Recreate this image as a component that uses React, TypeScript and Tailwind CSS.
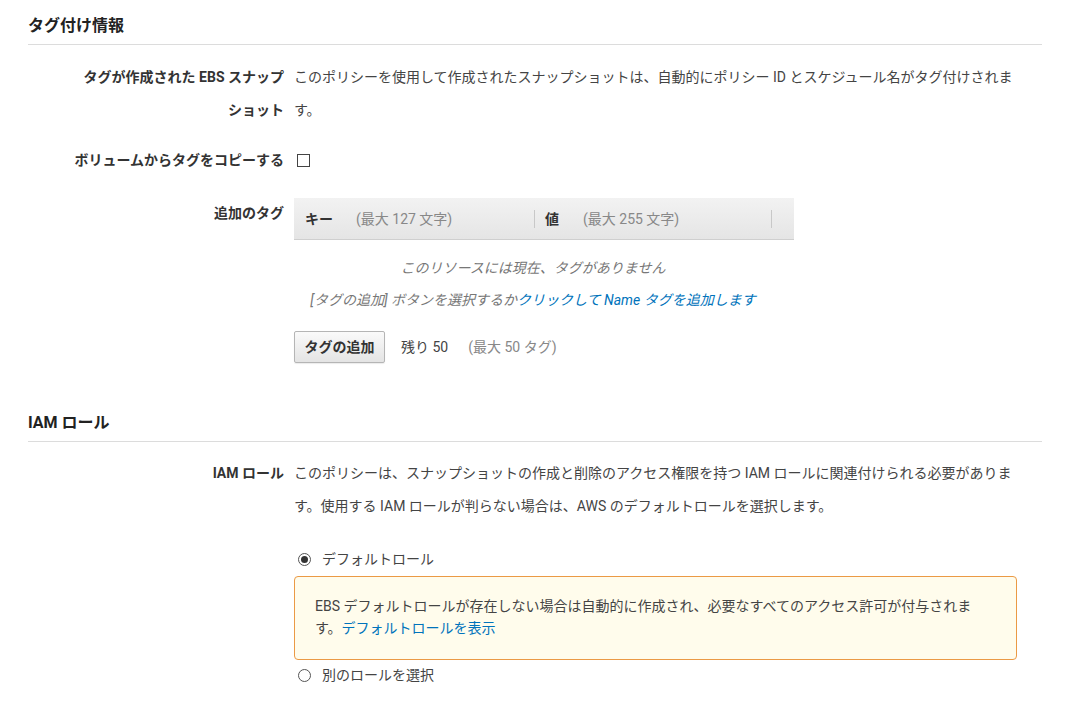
import React from 'react';

const font = "font-['Roboto','Noto_Sans_CJK_JP',sans-serif]";

function SectionHeading({ title, className = '' }: { title: string; className?: string }) {
  return (
    <div className={`w-[1014px] border-b border-[#dcdcdc] pb-[8px] ${className}`}>
      <h2 className="text-[16px] leading-[20px] font-bold text-[#222]">{title}</h2>
    </div>
  );
}

function Row({
  label,
  children,
  className = '',
}: {
  label: string;
  children: React.ReactNode;
  className?: string;
}) {
  return (
    <div className={`flex gap-[10px] ${className}`}>
      <div className="ml-[44px] w-[212px] shrink-0 text-right font-bold leading-[33px] text-[#333]">
        {label}
      </div>
      <div className="w-[726px] leading-[33px]">{children}</div>
    </div>
  );
}

function Radio({ checked, label }: { checked?: boolean; label: string }) {
  return (
    <div className="flex h-[24px] items-center">
      <span className="ml-[4px] flex h-[13px] w-[13px] items-center justify-center rounded-full border border-[#555] bg-white">
        {checked && <span className="h-[7px] w-[7px] rounded-full bg-[#333]" />}
      </span>
      <span className="ml-[11px] text-[#444]">{label}</span>
    </div>
  );
}

export default function App() {
  return (
    <div className={`${font} min-h-[701px] bg-white pl-[28px] pt-[16px] text-[14px] text-[#444]`}>
      <SectionHeading title="タグ付け情報" />

      <Row label="タグが作成された EBS スナップショット" className="mt-[16px]">
        このポリシーを使用して作成されたスナップショットは、自動的にポリシー ID とスケジュール名がタグ付けされます。
      </Row>

      <Row label="ボリュームからタグをコピーする" className="mt-[17px]">
        <div className="flex h-[33px] items-center">
          <span className="ml-[3px] h-[13px] w-[13px] border border-[#444] bg-white" />
        </div>
      </Row>

      <Row label="追加のタグ" className="mt-[20px]">
        <div className="mt-[1px] flex h-[42px] w-[500px] items-center border-b border-[#cfcfcf] bg-gradient-to-b from-[#f2f2f2] to-[#e5e5e5] leading-[20px]">
          <div className="flex h-[18px] w-[241px] items-center border-r border-[#c8c8c8] pl-[11px]">
            <span className="font-bold text-[#333]">キー</span>
            <span className="ml-[23px] text-[#888]">(最大 127 文字)</span>
          </div>
          <div className="flex h-[18px] w-[237px] items-center border-r border-[#c8c8c8] pl-[10px]">
            <span className="font-bold text-[#333]">値</span>
            <span className="ml-[24px] text-[#888]">(最大 255 文字)</span>
          </div>
        </div>
        <div className="mt-[12px] w-[478px] text-center italic leading-[32px] text-[#777]">
          <div>このリソースには現在、タグがありません</div>
          <div>
            [タグの追加] ボタンを選択するか
            <a className="text-[#0073bb]" href="#">
              クリックして Name タグを追加します
            </a>
          </div>
        </div>
        <div className="mt-[15px] flex items-center leading-[20px]">
          <button className="h-[32px] w-[91px] rounded-[2px] border border-[#b5b5b5] bg-gradient-to-b from-[#fafafa] to-[#e4e4e4] font-bold text-[#333] shadow-[0_1px_1px_rgba(0,0,0,0.08)]">
            タグの追加
          </button>
          <span className="ml-[16px] text-[#444]">残り 50</span>
          <span className="ml-[20px] text-[#888]">(最大 50 タグ)</span>
        </div>
      </Row>

      <SectionHeading title="IAM ロール" className="mt-[50px]" />

      <Row label="IAM ロール" className="mt-[15px]">
        このポリシーは、スナップショットの作成と削除のアクセス権限を持つ IAM ロールに関連付けられる必要があります。使用する IAM ロールが判らない場合は、AWS のデフォルトロールを選択します。
        <div className="mt-[24px] leading-[20px]">
          <Radio checked label="デフォルトロール" />
          <div className="mt-[5px] w-[723px] rounded-[4px] border border-[#eb9a45] bg-[#fffcec] pb-[20px] pl-[20px] pr-[34px] pt-[18px] leading-[22px] text-[#444]">
            EBS デフォルトロールが存在しない場合は自動的に作成され、必要なすべてのアクセス許可が付与されます。
            <a className="text-[#0073bb]" href="#">
              デフォルトロールを表示
            </a>
          </div>
          <div className="mt-[3px]">
            <Radio label="別のロールを選択" />
          </div>
        </div>
      </Row>
    </div>
  );
}
